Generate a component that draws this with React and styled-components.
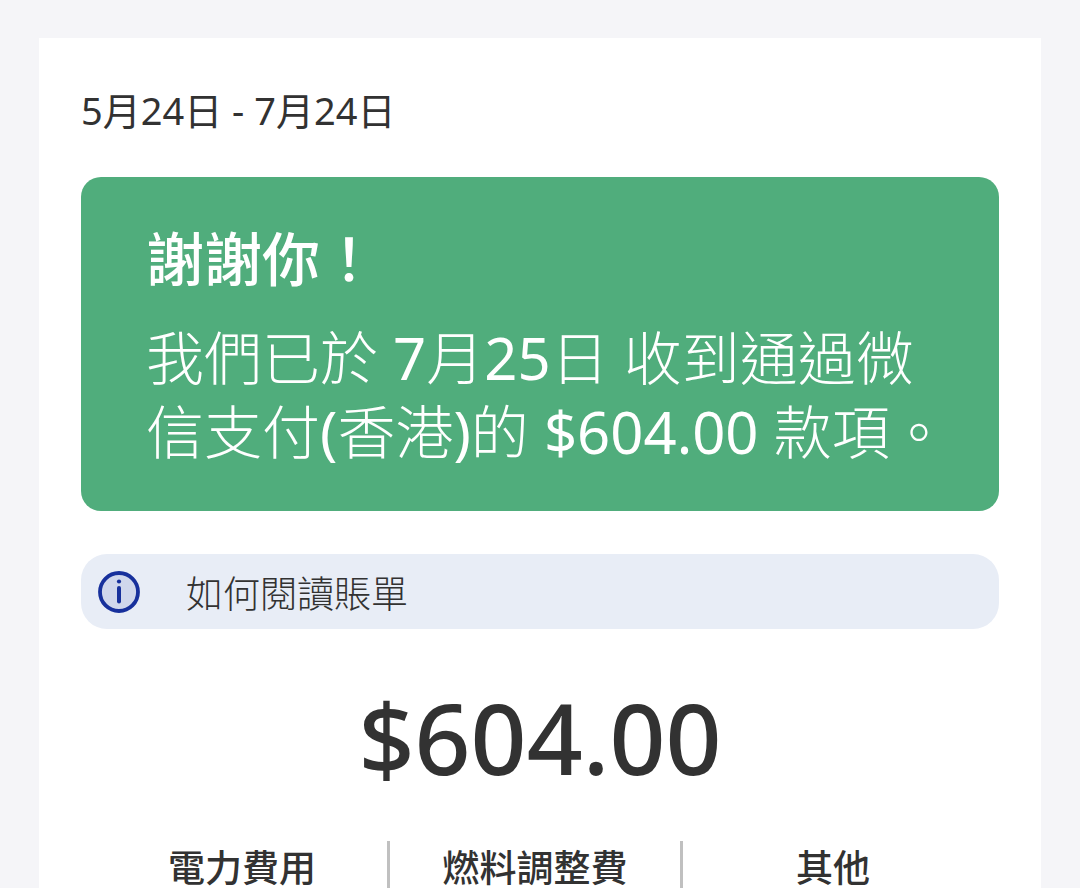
import React from "react";
import styled, { createGlobalStyle } from "styled-components";

const Global = createGlobalStyle`
  * { box-sizing: border-box; }
  html { background: #f5f5f8; }
  body {
    margin: 0;
    color: #323232;
    font-family: "Noto Sans", "Noto Sans CJK TC", sans-serif;
  }
  h1, h2, p { margin: 0; }
`;

const Page = styled.div`
  padding: 38px 39px 0;
`;

const Bill = styled.main`
  min-height: calc(100vh - 38px);
  padding: 44px 42px 0;
  background: #ffffff;
`;

const Period = styled.h1`
  font-size: 38px;
  font-weight: 400;
  line-height: 56px;
  white-space: nowrap;
`;

const Notice = styled.section`
  margin-top: 39px;
  padding: 44px 64px 42px 65px;
  border-radius: 20px;
  background: #50ad7c;
  color: #ffffff;
`;

const NoticeTitle = styled.h2`
  font-size: 58px;
  font-weight: 500;
  line-height: 76px;
`;

const NoticeText = styled.p`
  margin-top: 24px;
  font-size: 58px;
  font-weight: 300;
  line-height: 74px;
`;

const Line = styled.span`
  display: block;
  white-space: nowrap;
`;

const Figure = styled.span`
  font-weight: 400;
`;

const GuideLink = styled.a`
  display: flex;
  align-items: center;
  gap: 46px;
  height: 75px;
  margin-top: 43px;
  padding: 0 17px;
  border-radius: 26px;
  background: #e8edf6;
  color: #323232;
  font-size: 37px;
  font-weight: 300;
  text-decoration: none;
`;

const Total = styled.p`
  margin-top: 38px;
  font-size: 98px;
  font-weight: 500;
  line-height: 140px;
  text-align: center;
`;

const Charges = styled.div`
  display: grid;
  grid-template-columns: 290fr 293fr 303fr;
  margin: 34px 16px 0;
`;

const Charge = styled.div`
  border-left: ${(p) => (p.$divided ? "3px solid #c0c0c0" : "0")};
  font-size: 37px;
  font-weight: 500;
  line-height: 54px;
  text-align: center;
`;

const InfoIcon = () => (
  <svg width="42" height="42" viewBox="0 0 42 42" aria-hidden="true">
    <circle cx="21" cy="21" r="19" fill="#d0d7ec" stroke="#17309c" strokeWidth="3.8" />
    <circle cx="21" cy="10.5" r="2.1" fill="#17309c" />
    <path d="M21 17v13.5" stroke="#17309c" strokeWidth="4" strokeLinecap="round" />
  </svg>
);

const charges = ["電力費用", "燃料調整費", "其他"];

export default function App() {
  return (
    <Page lang="zh-Hant">
      <Global />
      <Bill>
        <Period>5月24日 - 7月24日</Period>
        <Notice>
          <NoticeTitle>謝謝你！</NoticeTitle>
          <NoticeText>
            <Line>我們已於 <Figure>7</Figure>月<Figure>25</Figure>日 收到通過微</Line>
            <Line>信支付<Figure>(</Figure>香港<Figure>)</Figure>的 <Figure>$604.00</Figure> 款項。</Line>
          </NoticeText>
        </Notice>
        <GuideLink href="#guide">
          <InfoIcon />
          如何閱讀賬單
        </GuideLink>
        <Total>$604.00</Total>
        <Charges>
          {charges.map((name, i) => (
            <Charge key={name} $divided={i > 0}>{name}</Charge>
          ))}
        </Charges>
      </Bill>
    </Page>
  );
}
